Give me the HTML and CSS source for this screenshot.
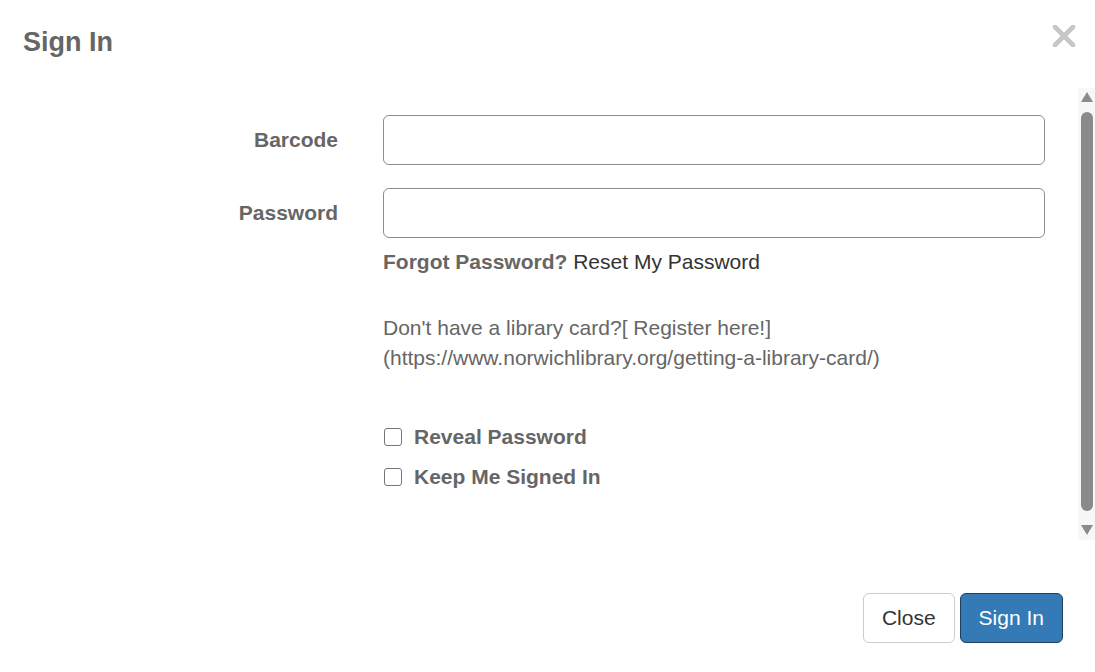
FILE: index.html
```html
<!DOCTYPE html>
<html lang="en">
<head>
  <meta charset="UTF-8" />
  <meta name="viewport" content="width=device-width, initial-scale=1.0"/>
  <title>Sign In</title>
  <link rel="stylesheet" href="styles.css">
</head>
<body>
  <div class="modal">
    <div class="modal-header">
      <h4 class="modal-title">Sign In</h4>
      <button class="close" aria-label="Close">
        <svg width="24" height="22" viewBox="0 0 24 22">
          <path d="M3 2 L21 20 M21 2 L3 20" stroke="#c6c6c6" stroke-width="4.6" stroke-linecap="round"/>
        </svg>
      </button>
    </div>

    <div class="modal-body">
      <div class="scroll-content">
        <form class="login-form">
          <label class="form-label" for="barcode">Barcode</label>
          <input class="form-control" id="barcode" type="text">

          <label class="form-label" for="password">Password</label>
          <input class="form-control" id="password" type="password">

          <div class="form-extra">
            <p class="help-line"><b>Forgot Password?</b> <a href="#">Reset My Password</a></p>
            <p class="register-note">Don't have a library card?[ Register here!]<br>(https://www.norwichlibrary.org/getting-a-library-card/)</p>
            <label class="check-row"><input type="checkbox"> Reveal Password</label>
            <label class="check-row"><input type="checkbox"> Keep Me Signed In</label>
          </div>
        </form>
      </div>
      <div class="scrollbar">
        <span class="arrow-up"></span>
        <span class="thumb"></span>
        <span class="arrow-down"></span>
      </div>
    </div>

    <div class="modal-footer">
      <button class="btn btn-default">Close</button>
      <button class="btn btn-primary">Sign In</button>
    </div>
  </div>
</body>
</html>
```

FILE: styles.css
```css
body {
  margin: 0;
  padding: 0;
  font-family: 'Liberation Sans', Arial, sans-serif;
  font-size: 21px;
  color: #333;
  background: #fff;
}
.modal {
  width: 1095px;
  height: 672px;
  display: flex;
  flex-direction: column;
}
.modal-header {
  display: flex;
  justify-content: space-between;
  align-items: flex-start;
  padding: 23px 19px 0 23px;
  height: 65px;
}
.modal-title {
  margin: 0;
  font-size: 27px;
  line-height: 38px;
  font-weight: bold;
  color: #666;
}
.close {
  background: none;
  border: none;
  padding: 0;
  margin-top: 2px;
  cursor: pointer;
}
.close svg {
  display: block;
}
.modal-body {
  display: flex;
  height: 452px;
}
.scroll-content {
  flex: 1;
  padding: 27px 33px 0 0;
}
.login-form {
  display: grid;
  grid-template-columns: 338px 1fr;
  column-gap: 45px;
  row-gap: 23px;
  align-items: center;
}
.form-label {
  text-align: right;
  font-weight: bold;
  color: #666;
}
.form-control {
  box-sizing: border-box;
  height: 50px;
  width: 100%;
  margin: 0;
  border: 1px solid #8d8d8d;
  border-radius: 6px;
  font-size: 21px;
  padding: 0 18px;
}
.form-extra {
  grid-column: 2;
  margin-top: -14px;
  line-height: 30px;
}
.help-line {
  margin: 0;
}
.help-line b {
  color: #666;
}
.help-line a {
  color: #333;
  text-decoration: none;
}
.register-note {
  margin: 36px 0 49px;
  color: #666;
}
.check-row {
  display: flex;
  align-items: center;
  height: 30px;
  margin-bottom: 10px;
  font-weight: bold;
  color: #666;
}
.check-row input {
  appearance: none;
  box-sizing: border-box;
  width: 18px;
  height: 18px;
  margin: 0 12px 0 1px;
  border: 1px solid #767676;
  border-radius: 3px;
  background: #fff;
}
.scrollbar {
  width: 17px;
  background: #f7f7f7;
  display: flex;
  flex-direction: column;
  align-items: center;
  padding: 4px 0;
  box-sizing: border-box;
}
.arrow-up, .arrow-down {
  width: 0;
  height: 0;
  border-left: 6px solid transparent;
  border-right: 6px solid transparent;
}
.arrow-up {
  border-bottom: 10px solid #8b8b8b;
  margin-bottom: 10px;
}
.arrow-down {
  border-top: 10px solid #8b8b8b;
  margin-top: 14px;
}
.thumb {
  width: 12px;
  height: 399px;
  background: #8a8a8a;
  border-radius: 6px;
}
.modal-footer {
  display: flex;
  justify-content: flex-end;
  gap: 5px;
  padding: 53px 32px 0 0;
}
.btn {
  height: 50px;
  padding: 0 18px;
  font-family: inherit;
  font-size: 21px;
  border-radius: 6px;
  cursor: pointer;
}
.btn-default {
  background: #fff;
  color: #333;
  border: 1px solid #ccc;
}
.btn-primary {
  background: #337ab7;
  color: #fff;
  border: 1px solid #1f3f5e;
}
```
